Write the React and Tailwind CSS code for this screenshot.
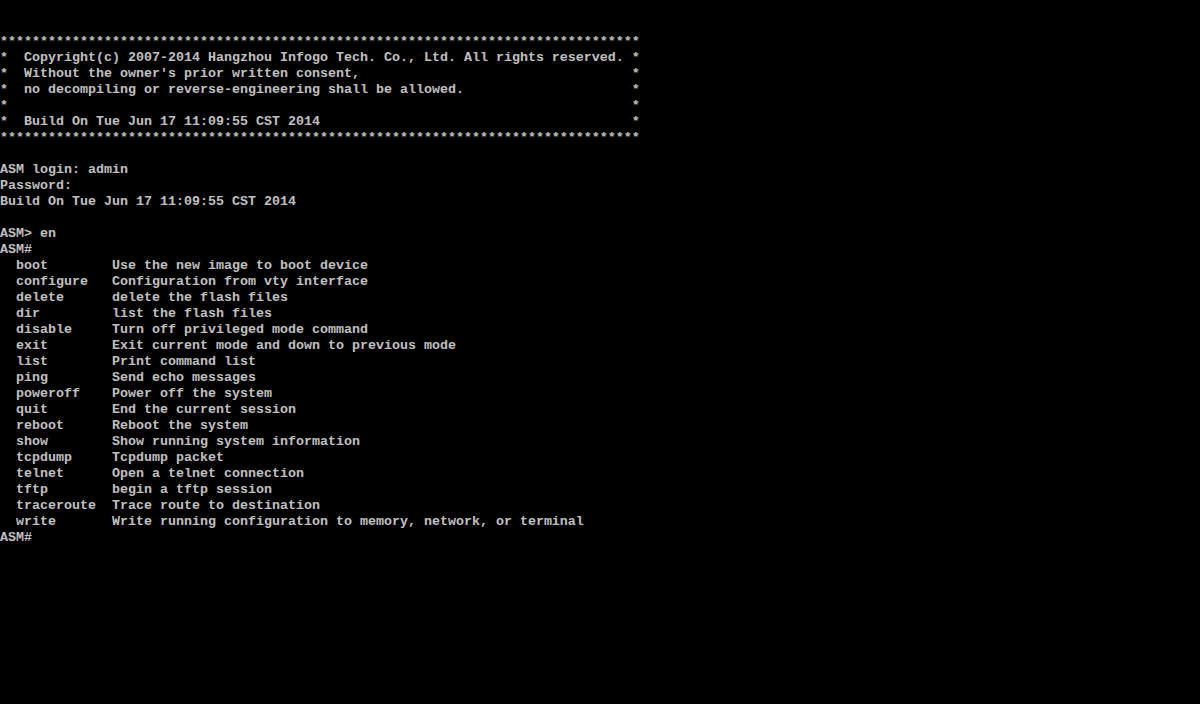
import React from "react";

const stars = "*".repeat(80);
const boxLine = (s) => ("*  " + s).padEnd(79, " ") + "*";

const commands = [
  ["boot", "Use the new image to boot device"],
  ["configure", "Configuration from vty interface"],
  ["delete", "delete the flash files"],
  ["dir", "list the flash files"],
  ["disable", "Turn off privileged mode command"],
  ["exit", "Exit current mode and down to previous mode"],
  ["list", "Print command list"],
  ["ping", "Send echo messages"],
  ["poweroff", "Power off the system"],
  ["quit", "End the current session"],
  ["reboot", "Reboot the system"],
  ["show", "Show running system information"],
  ["tcpdump", "Tcpdump packet"],
  ["telnet", "Open a telnet connection"],
  ["tftp", "begin a tftp session"],
  ["traceroute", "Trace route to destination"],
  ["write", "Write running configuration to memory, network, or terminal"],
];

const lines = [
  "",
  "",
  stars,
  boxLine("Copyright(c) 2007-2014 Hangzhou Infogo Tech. Co., Ltd. All rights reserved."),
  boxLine("Without the owner's prior written consent,"),
  boxLine("no decompiling or reverse-engineering shall be allowed."),
  "*".padEnd(79, " ") + "*",
  boxLine("Build On Tue Jun 17 11:09:55 CST 2014"),
  stars,
  "",
  "ASM login: admin",
  "Password:",
  "Build On Tue Jun 17 11:09:55 CST 2014",
  "",
  "ASM> en",
  "ASM#",
  ...commands.map(([c, d]) => "  " + c.padEnd(12, " ") + d),
  "ASM#",
];

export default function App() {
  return (
    <div className="w-[1200px] h-[704px] bg-black overflow-hidden pt-[2px]">
      <pre className="m-0 font-['Liberation_Mono',monospace] font-bold text-[13.333px] leading-[16px] text-[#c0c0c0]">
        {lines.map((l, i) => (
          <div key={i} className="h-4 whitespace-pre">
            {l}
          </div>
        ))}
      </pre>
    </div>
  );
}
